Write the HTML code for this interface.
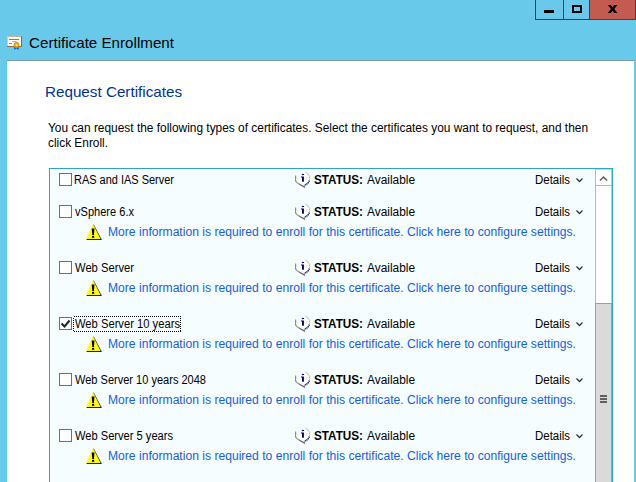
<!DOCTYPE html>
<html><head><meta charset="utf-8"><style>
html,body{margin:0;padding:0;width:636px;height:482px;overflow:hidden;background:#68c9ea;}
svg{display:block;}
text{font-family:"Liberation Sans",sans-serif;}
</style></head><body>
<svg width="636" height="482" viewBox="0 0 636 482" shape-rendering="crispEdges">
<rect x="0" y="0" width="636" height="482" fill="#68c9ea"/>
<g>
<rect x="535.5" y="-1" width="99.5" height="20.5" fill="none" stroke="#2f3a40" stroke-width="1"/>
<line x1="563.5" y1="0" x2="563.5" y2="19" stroke="#2f3a40" stroke-width="1"/>
<rect x="589" y="0" width="47" height="20" fill="#5c3632"/>
<rect x="590" y="0" width="45" height="19" fill="#c45b50"/>
<rect x="544" y="10" width="10" height="3" fill="#000"/>
<rect x="573" y="6" width="8" height="6" fill="none" stroke="#000" stroke-width="2"/>
</g>
<path d="M607.9 5 L611.1 5 L612.6 7.4 L614.1 5 L617.3 5 L614.3 8.9 L617.4 13 L614.2 13 L612.6 10.5 L611 13 L607.8 13 L610.9 8.9 Z" fill="#000" shape-rendering="geometricPrecision"/>
<g shape-rendering="geometricPrecision">
<rect x="7" y="36" width="15" height="11" fill="#8b6a48"/>
<rect x="7" y="36" width="14" height="1" fill="#c8b49a"/>
<rect x="7" y="36" width="1" height="10" fill="#d8c8b4"/>
<rect x="8" y="37" width="13" height="9" fill="#fffdf8"/>
<rect x="9" y="39" width="10" height="1" fill="#6a78c8"/>
<rect x="12" y="41" width="4.5" height="1" fill="#a8b0d8"/>
<rect x="9" y="43" width="3" height="1" fill="#8890c8"/>
<path d="M14 46.5 L14.5 50 L16.3 48.3 L18.3 50 L19 46.5 Z" fill="#1848e8"/>
<circle cx="16.5" cy="45" r="2.9" fill="#d89000"/>
<circle cx="16.5" cy="44.8" r="1.9" fill="#f0b820"/>
<circle cx="16.8" cy="45.3" r="0.8" fill="#fff0a0"/>
</g>
<text x="29" y="47.5" font-size="15" fill="#000" textLength="145" lengthAdjust="spacingAndGlyphs">Certificate Enrollment</text>
<rect x="7" y="60" width="627" height="1" fill="#7b9db2"/>
<rect x="7" y="61" width="627" height="421" fill="#ffffff"/>
<text x="45" y="97" font-size="15" fill="#003399" textLength="137" lengthAdjust="spacingAndGlyphs">Request Certificates</text>
<text x="48" y="132" font-size="12" fill="#000" textLength="540" lengthAdjust="spacingAndGlyphs">You can request the following types of certificates. Select the certificates you want to request, and then</text>
<text x="48" y="147" font-size="12" fill="#000" textLength="60" lengthAdjust="spacingAndGlyphs">click Enroll.</text>
<rect x="49.5" y="168.5" width="563" height="320" fill="#f6fdff" stroke="#2ea3cf" stroke-width="1"/>
<rect x="595" y="169" width="17" height="320" fill="#ffffff"/>
<rect x="595" y="169" width="1" height="320" fill="#b8b8b8"/>
<rect x="611" y="169" width="1" height="320" fill="#d4c8c4"/>
<rect x="595" y="185" width="17" height="1" fill="#b8b8b8"/>
<rect x="596" y="169" width="15" height="1" fill="#dcd2ce"/>
<path d="M600 180.5 L603.5 177 L607 180.5" fill="none" stroke="#606060" stroke-width="1.5" shape-rendering="geometricPrecision"/>
<rect x="595" y="303" width="17" height="190" fill="#dadada"/>
<rect x="595" y="303" width="17" height="1" fill="#a0a0a0"/>
<rect x="595" y="303" width="1" height="190" fill="#a0a0a0"/>
<rect x="611" y="303" width="1" height="190" fill="#a8a0a0"/>
<rect x="600" y="395" width="7" height="2" fill="#606060"/>
<rect x="600" y="398" width="7" height="2" fill="#606060"/>
<rect x="600" y="401" width="7" height="2" fill="#606060"/>
<rect x="59.5" y="173.5" width="12" height="12" fill="#fff" stroke="#707070" stroke-width="1"/>
<text x="74" y="184" font-size="12" fill="#000" textLength="100" lengthAdjust="spacingAndGlyphs">RAS and IAS Server</text>
<g shape-rendering="geometricPrecision" transform="translate(293,170)">
<circle cx="9.6" cy="8.6" r="7.4" fill="#ffffff"/>
<path d="M12.6 2.2 A7.2 7.2 0 0 1 16.6 9.5" fill="none" stroke="#8a8a8a" stroke-width="1" stroke-dasharray="1 0.6"/>
<path d="M16.4 10.5 A7.2 7.2 0 0 1 12 15" fill="none" stroke="#0a1e78" stroke-width="1.5" stroke-dasharray="1.3 0.5"/>
<path d="M2.6 5.5 L2.6 11 Q4 13 6.5 14.2 L11.5 17.2 L11.2 14.8" fill="none" stroke="#8c8c8c" stroke-width="1.2"/>
<path d="M6.5 14.2 L11.5 17.2" fill="none" stroke="#6a6a6a" stroke-width="1"/>
<ellipse cx="9.9" cy="4.4" rx="1.2" ry="0.75" fill="#000070"/>
<path d="M8 6.6 L10.9 6.6 L10.9 11.8 L9 11.8 L9 7.5 L8 7.5 Z" fill="#000070"/>
</g>
<text x="314" y="184" font-size="12" fill="#000" font-weight="bold" textLength="49" lengthAdjust="spacingAndGlyphs">STATUS:</text>
<text x="367" y="184" font-size="12" fill="#000" textLength="48" lengthAdjust="spacingAndGlyphs">Available</text>
<text x="535" y="184" font-size="12" fill="#000" textLength="35" lengthAdjust="spacingAndGlyphs">Details</text>
<path d="M576.5 178.5 L579.5 181.5 L582.5 178.5" fill="none" stroke="#303030" stroke-width="1.25" shape-rendering="geometricPrecision"/>
<rect x="59.5" y="205.5" width="12" height="12" fill="#fff" stroke="#707070" stroke-width="1"/>
<text x="75" y="216" font-size="12" fill="#000" textLength="59" lengthAdjust="spacingAndGlyphs">vSphere 6.x</text>
<g shape-rendering="geometricPrecision" transform="translate(293,202)">
<circle cx="9.6" cy="8.6" r="7.4" fill="#ffffff"/>
<path d="M12.6 2.2 A7.2 7.2 0 0 1 16.6 9.5" fill="none" stroke="#8a8a8a" stroke-width="1" stroke-dasharray="1 0.6"/>
<path d="M16.4 10.5 A7.2 7.2 0 0 1 12 15" fill="none" stroke="#0a1e78" stroke-width="1.5" stroke-dasharray="1.3 0.5"/>
<path d="M2.6 5.5 L2.6 11 Q4 13 6.5 14.2 L11.5 17.2 L11.2 14.8" fill="none" stroke="#8c8c8c" stroke-width="1.2"/>
<path d="M6.5 14.2 L11.5 17.2" fill="none" stroke="#6a6a6a" stroke-width="1"/>
<ellipse cx="9.9" cy="4.4" rx="1.2" ry="0.75" fill="#000070"/>
<path d="M8 6.6 L10.9 6.6 L10.9 11.8 L9 11.8 L9 7.5 L8 7.5 Z" fill="#000070"/>
</g>
<text x="314" y="216" font-size="12" fill="#000" font-weight="bold" textLength="49" lengthAdjust="spacingAndGlyphs">STATUS:</text>
<text x="367" y="216" font-size="12" fill="#000" textLength="48" lengthAdjust="spacingAndGlyphs">Available</text>
<text x="535" y="216" font-size="12" fill="#000" textLength="35" lengthAdjust="spacingAndGlyphs">Details</text>
<path d="M576.5 210.5 L579.5 213.5 L582.5 210.5" fill="none" stroke="#303030" stroke-width="1.25" shape-rendering="geometricPrecision"/>
<g shape-rendering="geometricPrecision" transform="translate(86,224)">
<path d="M7.6 0.2 L15.9 16 L0.4 16 Z" fill="#101080"/>
<path d="M7 0 L14.6 15 L0 15 Z" fill="#ffff00"/>
<path d="M5.7 4.6 L8.5 4.6 L7.9 11 L6.3 11 Z" fill="#000"/>
<rect x="6" y="11.8" width="2.2" height="2" fill="#000"/>
</g>
<text x="108" y="236" font-size="12" fill="#1560e0" textLength="468" lengthAdjust="spacingAndGlyphs">More information is required to enroll for this certificate. Click here to configure settings.</text>
<rect x="59.5" y="261.5" width="12" height="12" fill="#fff" stroke="#707070" stroke-width="1"/>
<text x="75" y="272" font-size="12" fill="#000" textLength="59" lengthAdjust="spacingAndGlyphs">Web Server</text>
<g shape-rendering="geometricPrecision" transform="translate(293,258)">
<circle cx="9.6" cy="8.6" r="7.4" fill="#ffffff"/>
<path d="M12.6 2.2 A7.2 7.2 0 0 1 16.6 9.5" fill="none" stroke="#8a8a8a" stroke-width="1" stroke-dasharray="1 0.6"/>
<path d="M16.4 10.5 A7.2 7.2 0 0 1 12 15" fill="none" stroke="#0a1e78" stroke-width="1.5" stroke-dasharray="1.3 0.5"/>
<path d="M2.6 5.5 L2.6 11 Q4 13 6.5 14.2 L11.5 17.2 L11.2 14.8" fill="none" stroke="#8c8c8c" stroke-width="1.2"/>
<path d="M6.5 14.2 L11.5 17.2" fill="none" stroke="#6a6a6a" stroke-width="1"/>
<ellipse cx="9.9" cy="4.4" rx="1.2" ry="0.75" fill="#000070"/>
<path d="M8 6.6 L10.9 6.6 L10.9 11.8 L9 11.8 L9 7.5 L8 7.5 Z" fill="#000070"/>
</g>
<text x="314" y="272" font-size="12" fill="#000" font-weight="bold" textLength="49" lengthAdjust="spacingAndGlyphs">STATUS:</text>
<text x="367" y="272" font-size="12" fill="#000" textLength="48" lengthAdjust="spacingAndGlyphs">Available</text>
<text x="535" y="272" font-size="12" fill="#000" textLength="35" lengthAdjust="spacingAndGlyphs">Details</text>
<path d="M576.5 266.5 L579.5 269.5 L582.5 266.5" fill="none" stroke="#303030" stroke-width="1.25" shape-rendering="geometricPrecision"/>
<g shape-rendering="geometricPrecision" transform="translate(86,280)">
<path d="M7.6 0.2 L15.9 16 L0.4 16 Z" fill="#101080"/>
<path d="M7 0 L14.6 15 L0 15 Z" fill="#ffff00"/>
<path d="M5.7 4.6 L8.5 4.6 L7.9 11 L6.3 11 Z" fill="#000"/>
<rect x="6" y="11.8" width="2.2" height="2" fill="#000"/>
</g>
<text x="108" y="292" font-size="12" fill="#1560e0" textLength="468" lengthAdjust="spacingAndGlyphs">More information is required to enroll for this certificate. Click here to configure settings.</text>
<rect x="59.5" y="317.5" width="12" height="12" fill="#fff" stroke="#707070" stroke-width="1"/>
<path d="M61.5 323.5 L64.5 326.5 L69.5 320.5" fill="none" stroke="#222" stroke-width="2" shape-rendering="geometricPrecision"/>
<rect x="73.5" y="316.5" width="107" height="15" fill="none" stroke="#000" stroke-width="1" stroke-dasharray="1 1"/>
<text x="75" y="328" font-size="12" fill="#000" textLength="105" lengthAdjust="spacingAndGlyphs">Web Server 10 years</text>
<g shape-rendering="geometricPrecision" transform="translate(293,314)">
<circle cx="9.6" cy="8.6" r="7.4" fill="#ffffff"/>
<path d="M12.6 2.2 A7.2 7.2 0 0 1 16.6 9.5" fill="none" stroke="#8a8a8a" stroke-width="1" stroke-dasharray="1 0.6"/>
<path d="M16.4 10.5 A7.2 7.2 0 0 1 12 15" fill="none" stroke="#0a1e78" stroke-width="1.5" stroke-dasharray="1.3 0.5"/>
<path d="M2.6 5.5 L2.6 11 Q4 13 6.5 14.2 L11.5 17.2 L11.2 14.8" fill="none" stroke="#8c8c8c" stroke-width="1.2"/>
<path d="M6.5 14.2 L11.5 17.2" fill="none" stroke="#6a6a6a" stroke-width="1"/>
<ellipse cx="9.9" cy="4.4" rx="1.2" ry="0.75" fill="#000070"/>
<path d="M8 6.6 L10.9 6.6 L10.9 11.8 L9 11.8 L9 7.5 L8 7.5 Z" fill="#000070"/>
</g>
<text x="314" y="328" font-size="12" fill="#000" font-weight="bold" textLength="49" lengthAdjust="spacingAndGlyphs">STATUS:</text>
<text x="367" y="328" font-size="12" fill="#000" textLength="48" lengthAdjust="spacingAndGlyphs">Available</text>
<text x="535" y="328" font-size="12" fill="#000" textLength="35" lengthAdjust="spacingAndGlyphs">Details</text>
<path d="M576.5 322.5 L579.5 325.5 L582.5 322.5" fill="none" stroke="#303030" stroke-width="1.25" shape-rendering="geometricPrecision"/>
<g shape-rendering="geometricPrecision" transform="translate(86,336)">
<path d="M7.6 0.2 L15.9 16 L0.4 16 Z" fill="#101080"/>
<path d="M7 0 L14.6 15 L0 15 Z" fill="#ffff00"/>
<path d="M5.7 4.6 L8.5 4.6 L7.9 11 L6.3 11 Z" fill="#000"/>
<rect x="6" y="11.8" width="2.2" height="2" fill="#000"/>
</g>
<text x="108" y="348" font-size="12" fill="#1560e0" textLength="468" lengthAdjust="spacingAndGlyphs">More information is required to enroll for this certificate. Click here to configure settings.</text>
<rect x="59.5" y="373.5" width="12" height="12" fill="#fff" stroke="#707070" stroke-width="1"/>
<text x="75" y="384" font-size="12" fill="#000" textLength="131" lengthAdjust="spacingAndGlyphs">Web Server 10 years 2048</text>
<g shape-rendering="geometricPrecision" transform="translate(293,370)">
<circle cx="9.6" cy="8.6" r="7.4" fill="#ffffff"/>
<path d="M12.6 2.2 A7.2 7.2 0 0 1 16.6 9.5" fill="none" stroke="#8a8a8a" stroke-width="1" stroke-dasharray="1 0.6"/>
<path d="M16.4 10.5 A7.2 7.2 0 0 1 12 15" fill="none" stroke="#0a1e78" stroke-width="1.5" stroke-dasharray="1.3 0.5"/>
<path d="M2.6 5.5 L2.6 11 Q4 13 6.5 14.2 L11.5 17.2 L11.2 14.8" fill="none" stroke="#8c8c8c" stroke-width="1.2"/>
<path d="M6.5 14.2 L11.5 17.2" fill="none" stroke="#6a6a6a" stroke-width="1"/>
<ellipse cx="9.9" cy="4.4" rx="1.2" ry="0.75" fill="#000070"/>
<path d="M8 6.6 L10.9 6.6 L10.9 11.8 L9 11.8 L9 7.5 L8 7.5 Z" fill="#000070"/>
</g>
<text x="314" y="384" font-size="12" fill="#000" font-weight="bold" textLength="49" lengthAdjust="spacingAndGlyphs">STATUS:</text>
<text x="367" y="384" font-size="12" fill="#000" textLength="48" lengthAdjust="spacingAndGlyphs">Available</text>
<text x="535" y="384" font-size="12" fill="#000" textLength="35" lengthAdjust="spacingAndGlyphs">Details</text>
<path d="M576.5 378.5 L579.5 381.5 L582.5 378.5" fill="none" stroke="#303030" stroke-width="1.25" shape-rendering="geometricPrecision"/>
<g shape-rendering="geometricPrecision" transform="translate(86,392)">
<path d="M7.6 0.2 L15.9 16 L0.4 16 Z" fill="#101080"/>
<path d="M7 0 L14.6 15 L0 15 Z" fill="#ffff00"/>
<path d="M5.7 4.6 L8.5 4.6 L7.9 11 L6.3 11 Z" fill="#000"/>
<rect x="6" y="11.8" width="2.2" height="2" fill="#000"/>
</g>
<text x="108" y="404" font-size="12" fill="#1560e0" textLength="468" lengthAdjust="spacingAndGlyphs">More information is required to enroll for this certificate. Click here to configure settings.</text>
<rect x="59.5" y="429.5" width="12" height="12" fill="#fff" stroke="#707070" stroke-width="1"/>
<text x="75" y="440" font-size="12" fill="#000" textLength="98" lengthAdjust="spacingAndGlyphs">Web Server 5 years</text>
<g shape-rendering="geometricPrecision" transform="translate(293,426)">
<circle cx="9.6" cy="8.6" r="7.4" fill="#ffffff"/>
<path d="M12.6 2.2 A7.2 7.2 0 0 1 16.6 9.5" fill="none" stroke="#8a8a8a" stroke-width="1" stroke-dasharray="1 0.6"/>
<path d="M16.4 10.5 A7.2 7.2 0 0 1 12 15" fill="none" stroke="#0a1e78" stroke-width="1.5" stroke-dasharray="1.3 0.5"/>
<path d="M2.6 5.5 L2.6 11 Q4 13 6.5 14.2 L11.5 17.2 L11.2 14.8" fill="none" stroke="#8c8c8c" stroke-width="1.2"/>
<path d="M6.5 14.2 L11.5 17.2" fill="none" stroke="#6a6a6a" stroke-width="1"/>
<ellipse cx="9.9" cy="4.4" rx="1.2" ry="0.75" fill="#000070"/>
<path d="M8 6.6 L10.9 6.6 L10.9 11.8 L9 11.8 L9 7.5 L8 7.5 Z" fill="#000070"/>
</g>
<text x="314" y="440" font-size="12" fill="#000" font-weight="bold" textLength="49" lengthAdjust="spacingAndGlyphs">STATUS:</text>
<text x="367" y="440" font-size="12" fill="#000" textLength="48" lengthAdjust="spacingAndGlyphs">Available</text>
<text x="535" y="440" font-size="12" fill="#000" textLength="35" lengthAdjust="spacingAndGlyphs">Details</text>
<path d="M576.5 434.5 L579.5 437.5 L582.5 434.5" fill="none" stroke="#303030" stroke-width="1.25" shape-rendering="geometricPrecision"/>
<g shape-rendering="geometricPrecision" transform="translate(86,448)">
<path d="M7.6 0.2 L15.9 16 L0.4 16 Z" fill="#101080"/>
<path d="M7 0 L14.6 15 L0 15 Z" fill="#ffff00"/>
<path d="M5.7 4.6 L8.5 4.6 L7.9 11 L6.3 11 Z" fill="#000"/>
<rect x="6" y="11.8" width="2.2" height="2" fill="#000"/>
</g>
<text x="108" y="460" font-size="12" fill="#1560e0" textLength="468" lengthAdjust="spacingAndGlyphs">More information is required to enroll for this certificate. Click here to configure settings.</text>
</svg></body></html>
